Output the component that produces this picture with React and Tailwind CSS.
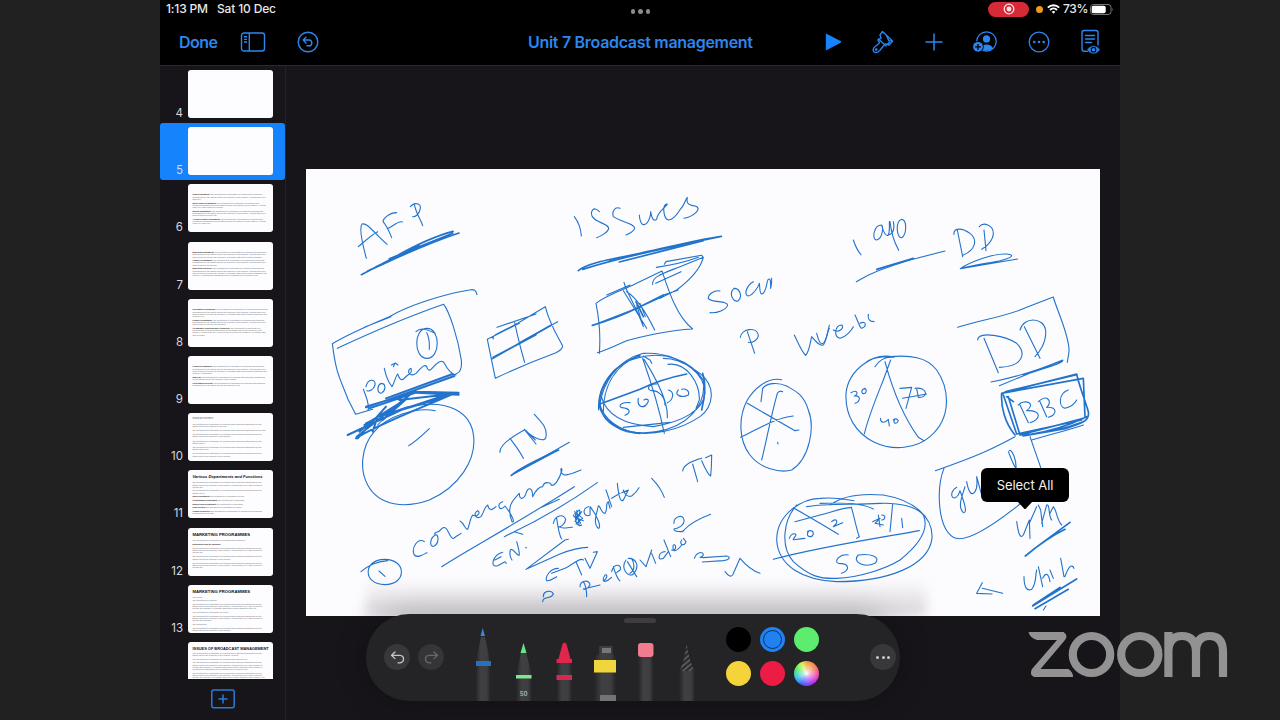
import React from "react";

const INK = "#2273cc";

const filler =
  "The department is responsible for planning and producing programmes for the station and for the audience of the channel. It works with every other section to prepare the schedule, to manage staff and to control budgets for the network. It maintains the standards of the broadcast and reviews the content before it goes on air each day. ";

const slides = [
  { n: 4 },
  { n: 5, selected: true },
  { n: 6, top: "pt-[9px]", paras: [["News Department: ", 150], ["Sales Traffic Department: ", 165], ["Sports Department: ", 170], ["Art and Creative Department: ", 150]] },
  { n: 7, top: "pt-[9.5px]", paras: [["Marketing Department: ", 220], ["Finance Department: ", 170], ["Marketing Research: ", 300]] },
  { n: 8, top: "pt-[9.5px]", paras: [["Information Technology: ", 240], ["Finance Department: ", 180], ["HR Manager Reporting and Production: ", 210]] },
  { n: 9, top: "pt-[9.5px]", paras: [["Product Department: ", 250], ["Make-Up: ", 120], ["Presentation Director: ", 110]] },
  { n: 10, top: "pt-[3.5px]", heading: "Broadcast Research", gap: true, paras: [["", 115], ["", 80], ["", 120], ["", 90], ["", 95], ["", 120]] },
  { n: 11, title: "Various Departments and Functions", italic: true, paras: [["", 170], ["", 90], ["Sales Department ", 38], ["Programming Department ", 30], ["Engineering Department ", 30], ["News Section ", 40], ["Human Resources ", 80]] },
  { n: 12, title: "MARKETING PROGRAMMES", gap: true, paras: [["", 58], ["Distribution and the message", 0], ["", 170], ["", 120], ["", 170]] },
  { n: 13, title: "MARKETING PROGRAMMES", paras: [["", 10], ["", 26], ["", 230], ["", 40], ["", 180], ["", 15], ["", 120]] },
  { n: 14, title: "ISSUES OF BROADCAST MANAGEMENT", wide: true, paras: [["", 130], ["", 60], ["", 300], ["", 240]] },
];

function Thumb({ s }) {
  return (
    <div className={"flex h-[57.2px] shrink-0 items-center rounded-[3px] " + (s.selected ? "bg-[#1583fb]" : "")}>
      <div className="flex h-12 w-[23px] shrink-0 items-end justify-end text-[11.5px] leading-[10px] text-[#d8d8dc]">{s.n === 14 ? "" : s.n}</div>
      <div className={"ml-[4.5px] h-12 w-[85px] overflow-hidden rounded-[3px] bg-[#fdfcfe] px-[5px] text-[#6a686e] " + (s.top || "pt-[4px]")}>
        {s.title && (
          <div className={"mb-[1px] whitespace-nowrap font-['Liberation_Sans',sans-serif] font-bold text-[#111] " + (s.italic ? "italic text-[4.1px] leading-[6px]" : s.wide ? "text-[3.9px] leading-[5px]" : "text-[4.2px] leading-[6px]")}>{s.title}</div>
        )}
        {s.heading && <div className="mb-[3px] text-[2.2px] leading-[3px]">{s.heading}</div>}
        {(s.paras || []).map(([b, len], i) => (
          <p key={i} className={"text-[2px] leading-[2.25px] font-['Liberation_Sans',sans-serif] " + (s.gap ? "mb-[1.9px]" : "mb-[1.4px]")}>
            <b className="text-[#1c1b1e]">{b}</b>
            {(filler + filler).slice(0, len)}
          </p>
        ))}
      </div>
    </div>
  );
}

/* Each sheet of ink strokes is stored at triple scale from its own origin. */
const ink = [
  {
    at: "translate(306 170) scale(.33333)",
    fine: [
      "M181 265C170 225 158 175 168 162C185 158 200 185 243 223M157 230C175 215 195 195 215 185",
      "M272 128C250 128 232 145 231 155C243 168 250 185 257 203M244 176C260 170 278 150 289 156",
      "M313 110C325 95 345 100 343 115C340 135 325 142 320 140M325 103C330 130 345 150 350 167",
      "M94 535C180 495 320 435 413 403C430 425 455 500 466 570C468 595 465 610 440 615",
      "M513 374C510 360 505 357 490 360C400 375 300 410 250 440C190 465 130 490 79 521C90 610 100 620 127 690L149 733L200 718M175 472L255 440",
      "M363 475C322 475 322 565 363 565C404 565 404 475 363 475M330 485C345 470 360 478 388 490M362 488C372 505 370 520 370 538",
      "M172 658C185 690 190 710 186 720M180 650C185 625 210 625 207 645C203 660 190 665 183 662",
      "M225 640C210 650 215 675 228 668C240 660 240 640 225 640M235 595C240 620 250 640 258 650C265 640 268 620 275 612C280 625 285 635 295 625C305 610 320 615 315 595C300 600 310 625 330 610C345 595 355 580 362 590C365 600 370 605 378 595C400 570 410 570 415 580C425 600 440 615 450 615M256 585l12-6l8 6M262 590l4-8",
      "M573 472L690 432M562 507C555 490 600 485 660 445L718 410C730 460 750 490 770 528Q770 538 750 548C690 570 620 600 568 625L544 508L640 460M626 458C635 500 645 540 656 577M640 518L755 455",
    ],
    bold: ["M166 314L250 270C310 235 380 200 441 184M185 303C270 265 350 225 459 189M250 266L440 190M210 290L340 228", "M558 566L640 520L735 466M562 562L690 494"],
  },
  {
    at: "translate(306 390) scale(.33333)",
    fine: [
      "M388 62C330 50 240 80 205 125C165 170 160 240 185 285C220 350 300 355 370 330C460 290 510 210 503 140C495 60 420 35 340 45C280 50 240 75 215 105M308 167C325 158 350 135 370 116",
      "M582 187C580 170 600 150 655 120M612 145C630 170 640 180 652 205M655 118L690 162M660 122C680 145 720 160 720 140C725 110 700 90 685 73M655 118L688 150M616 256L790 157",
      "M355 455C335 440 315 475 325 495C335 505 350 495 363 488M388 435C370 445 370 475 385 468C400 460 398 430 388 435C380 425 400 430 405 418C425 395 430 450 443 445C455 435 460 435 465 430",
      "M462 393C475 400 478 420 485 418C492 400 492 385 500 375C515 385 525 365 515 362C500 370 510 390 525 380C535 365 535 350 545 345C550 365 560 360 570 350",
      "M590 335C570 340 580 370 597 348C615 370 630 400 618 395C600 350 620 330 640 310C640 335 655 325 660 310C665 290 680 290 680 320C690 300 700 290 710 290C715 270 740 280 735 285C745 290 760 270 768 240C765 225 760 250 775 255C790 255 810 245 825 240",
      "M407 530C500 470 600 420 805 290M595 440C680 400 780 345 874 278M600 437L625 425L650 433M700 355L760 328",
      "M236 508C170 508 170 584 236 584C303 584 303 508 236 508M165 545C190 525 210 515 245 512M219 543L237 559",
      "M590 487C560 495 550 535 575 527L597 515M567 510L585 500M618 510C610 500 610 480 616 478C625 480 635 500 640 495C640 480 635 465 632 455M599 518l2 2M659 472l2 2",
    ],
    bold: ["M616 256C640 235 680 215 758 180M625 250L752 182"],
    heavy: [
      "M180 52L250 28L445-42M240 25L440-48M180 50L330 5L458 8M190 55L330 8L458 14M280 30L455 10M125 135L285 60L440 8M150 145C200 110 330 60 440 12M152 140L330 0M175 105L280 40L230 90L300 28M155 145L240 50M200 125L215 80L420 20M180 100L210 85L160 125",
    ],
  },
  {
    at: "translate(560 170) scale(.33333)",
    fine: [
      "M43 140Q62 165 64 198M118 125C100 105 90 125 97 140C110 160 145 160 146 175C145 185 125 198 110 203M180 115C165 108 155 125 160 140C180 155 225 160 224 175C220 185 210 190 198 195",
      "M238 135C240 160 248 170 260 160C272 145 272 130 272 125C275 145 280 155 290 148C292 125 320 110 322 102C305 100 310 145 325 150C340 148 350 135 358 122C375 105 375 90 382 82C378 100 385 105 405 108C430 115 400 140 372 145",
      "M118 550C122 500 118 450 108 400C140 375 190 360 225 342L306 303C325 360 350 440 398 477C330 480 240 500 200 512C170 525 140 540 112 548M140 375L210 345",
      "M192 337C200 370 225 400 250 470M190 362L260 475M200 365C225 380 250 410 284 480M230 405L250 470M240 400L256 440M310 375L354 361",
      "M313 283L318 275L425 256M289 292C340 285 380 275 415 262M278 343C275 320 310 310 360 290L430 262C420 300 390 330 350 360L300 385M287 340L363 305M425 256L430 262",
      "M480 363C465 360 445 370 445 385C455 400 500 390 503 405C500 420 470 430 450 428M522 355C505 370 520 400 535 392C548 380 540 355 522 355M580 335C560 345 550 375 565 378C580 375 595 350 598 340C600 350 598 370 605 372C620 370 620 330 625 328C632 325 632 335 632 355C635 340 637 330 634 325",
      "M541 502C545 475 590 470 595 495C595 510 575 520 565 517M562 485L584 550M703 495C715 520 725 545 737 556C748 545 750 520 755 500C768 515 780 530 790 525C800 510 800 490 808 475",
      "M148 272L300 238",
    ],
    bold: ["M55 302C80 280 150 268 240 250C330 230 420 208 484 199M68 298C150 272 300 236 484 199M178 276L300 245L430 212", "M97 466C150 450 200 430 240 410L310 375M110 462L240 412M180 437L310 378M228 395L250 440"],
  },
  {
    at: "translate(540 390) scale(.33333)",
    fine: [
      "M85 448L75 450L-42 538L60 492C90 480 120 472 143 472",
      "M50 385C55 420 60 440 65 447M40 400C45 375 70 370 77 388C75 405 60 412 55 410C70 420 85 410 97 412",
      "M100 375C110 395 125 365 118 360C100 370 105 415 125 405M104 370L122 400M110 362L118 408M102 380L130 392M105 395L125 365M104 365L128 385L108 402",
      "M145 350C125 355 130 385 150 375L150 350C175 380 185 415 175 415C158 400 170 370 175 348C180 345 185 372 195 370C205 355 195 340 205 335L210 355M198 300L215 350M232 280C235 310 240 340 250 330L265 300L245 308M250 300C255 315 265 322 275 318C285 310 290 305 297 293M215 325L240 310",
      "M335 265C350 280 365 300 373 322M428 243C430 225 450 215 485 205M458 222L473 275M485 212C495 235 505 255 512 258C515 230 515 210 515 195L497 203",
      "M402 400C400 380 430 370 432 390C435 405 415 415 402 417C400 425 430 428 432 420C450 400 480 385 512 373",
      "M130 575C140 590 140 605 140 620M120 590C120 570 150 568 150 585C145 595 135 600 130 597L180 585M190 572C200 570 205 550 195 555C185 570 190 580 205 570L215 562M220 530C225 550 235 570 240 572M215 545C222 515 248 525 240 540L230 548",
      "M258 510C240 535 265 565 280 552C300 530 290 505 265 505M262 515L290 560M275 505C285 525 285 540 270 550M300 510L318 530L335 480M335 490L347 520M375 485C355 485 350 515 370 505L385 485M372 450L392 500M395 480C410 485 410 460 400 465C395 490 410 485 425 465M425 450C415 465 435 470 438 455L430 445",
      "M55 535C30 535 15 560 20 572C30 575 40 565 50 560M35 550L75 535M75 535C90 530 120 500 130 510M108 515L125 555M135 505L150 535L172 485L160 487M10 620C10 600 35 600 40 612C35 625 20 620 10 628L8 635",
      "M463 505C470 485 490 483 490 495C485 505 470 500 490 503L560 498C572 500 570 510 550 512L487 516M555 545Q570 565 578 555L600 505Q630 540 660 550",
      "M725-31C680-40 640 0 622 30C595 80 595 150 630 195C660 235 720 250 755 240C810 205 825 110 805 60C790 10 760 0 740-12C710-25 680-20 668-5L663 35M622 40L765 122L777 120M602 142C650 120 700 85 760 78M665 210C680 150 690 90 712 10Q718 0 728 5M713 157l1 5",
      "M270 38C240 35 235 50 245 53C270 55 275 68 255 76M295 25C290 50 310 58 322 40C330 28 320 25 312 30M350-18C325-20 318 0 335 2C350 0 375 15 375 45M385 0C405 5 400 30 382 38M415 0C400 15 425 25 445 15C450 0 435-5 425-2",
      "M306-100C320-60 350 20 373 130M312-92C345-40 385 30 382 83M310-102L330-90L335-80M250 112L390 97M384-77C440-85 480-20 478 30L468 55",
      "M180 40C190-20 230-90 310-110C400-115 450-70 480-50C530-10 520 50 480 80C420 120 340 140 260 125C200 105 175 70 180 30",
      "M176 60C170-10 220-80 290-95C370-120 450-90 490-30C500 50 440 110 350 125C260 140 185 100 176 40",
      "M190 65C190 0 215-70 300-105M184 20C200 80 260 105 340 110C430 95 490 60 495 10C495-50 430-95 370-95",
    ],
    bold: ["M178 40C180-10 220-80 300-102M178 40C190 90 240 125 300 130M488-50C498-20 495 20 485 60", "M180 42L300-2C340-22 400-40 440-48"],
  },
  {
    at: "translate(820 170) scale(.33333)",
    fine: [
      "M100 210Q110 240 123 254M185 165C160 165 155 210 170 210C190 205 190 165 185 165C190 190 200 200 205 195C212 180 205 150 210 155C215 200 230 230 236 241M205 195C225 190 222 165 220 155M245 148C225 155 230 205 245 203C260 195 262 150 245 148",
      "M109 335C150 310 190 295 270 270L375 243",
      "M402 193C400 170 430 175 450 190C475 210 465 240 430 255M412 180L428 260M478 170C490 155 520 165 520 190C520 210 500 230 485 238M492 180L498 242M421 296C450 275 520 250 560 252C590 255 570 265 540 272C500 280 460 285 421 296L593 267",
      "M413 472C480 450 560 440 620 412L700 381C710 420 750 500 747 545L742 577M473 510C475 480 560 500 590 520C620 550 610 590 538 592M492 505L535 608M600 480C610 440 670 440 677 480C680 520 655 550 645 560M613 470L660 565M513 636C600 620 680 590 728 570C735 580 640 605 610 615M538 647L640 605L728 572",
      "M-10 490C0 530 10 530 20 500L28 465M40 480C55 490 75 475 65 465C45 465 40 500 60 505C80 500 95 480 100 470M105 435C115 455 118 472 125 475C140 470 140 450 120 460M145 433Q142 455 162 455",
    ],
    bold: ["M170 298L280 265"],
  },
  {
    at: "translate(820 380) scale(.33333)",
    fine: [
      "M165-40C180-65 200-70 222-68C160-85 85-30 78 40C75 110 110 160 160 185C220 215 290 205 330 170C400 110 385 20 350-30C320-70 270-75 210-70Q160-70 140-55",
      "M212-60L190 0C170 50 145 110 133 162M195-55C215 20 250 110 295 172L312 182M93 38C115 25 115 45 103 48C125 45 120 65 105 70M135 25C120 30 125 45 135 40C142 32 138 25 132 27M240 25L275 22L258 85M248 55L320 42M290 25L295 52C325 55 325 20 285 25M182 115C180 130 195 130 205 118L208 138M225 118C215 130 230 135 235 122C232 115 225 115 220 120",
      "M600 75L625 128M595 75C615 55 650 70 620 92C670 90 660 120 630 128M660 65L680 110M655 65C680 40 700 65 680 82C715 80 710 105 685 112M745 30C715 40 715 80 735 85C755 80 765 70 770 60M635 180C700 160 750 150 790 135",
      "M585 170C520 205 480 225 346 272M372 265C350 320 350 440 400 472C440 495 540 420 600 372M630 170L663 265M565 215C575 240 580 255 588 265C590 240 575 205 568 212",
      "M410 322C385 335 395 370 415 345L420 332C430 360 445 400 430 398C410 380 430 340 435 320M440 305C445 335 455 350 465 335C475 320 470 300 470 290L485 345",
      "M590 425C595 460 600 478 610 465L628 420L630 475M628 430L650 380M655 375L662 390L668 440M665 430L680 375C690 370 685 410 695 420M690 400L700 380C710 390 710 420 725 435",
      "M612 590C612 620 620 635 635 628C650 610 645 590 650 570M655 560L668 620M668 595C675 580 685 575 690 605M722 535L732 590M735 590C745 560 755 550 762 565M690 570L700 595",
      "M487 608L470 640L516 642M487 625L548 640M30 375C70 345 130 340 190 345C280 360 340 410 336 475C325 560 200 605 50 605C-50 600-125 560-130 480C-130 400-50 355 0 355C40 352 70 355 102 362",
      "M-70 375C-110 420-120 500-80 545C-30 590 0 597 50 595C120 592 200 565 240 540C290 500 330 450 310 405C290 380 240 368 180 370C100 375 20 370-40 380M0 370Q120 365 160 387",
      "M-140 538C0 500 200 470 298 452M-80 383L0 430L55 463M-75 425L0 405C40 395 60 385 95 382M95 385C105 420 110 450 118 470L110 475M218 372L210 455M245 415L248 443",
      "M-92 475C-85 455-65 460-75 470C-85 485-85 478-45 475M-35 455C-45 470-25 475-20 463C-20 450-30 450-38 455M35 425C45 415 55 420 48 432L40 440L68 428M158 425L180 415L165 430L190 435M175 405L180 440M185 405C200 405 195 420 185 420",
      "M85 525C60 520 40 545 55 550C90 550 90 570 65 580M115 525C95 545 130 565 165 550C185 530 150 520 115 525M670 690L678 678",
    ],
    bold: [
      "M545 40C620 20 700 0 770-18C775 10 795 60 805 95C810 125 780 130 740 145L610 168M545 40C542 80 555 130 585 165M555 38L790-5L795 110M550 45L590 162L785 120M565 50L600 165L790 115M600 165Q700 160 790 125M560 50L580 65M620 165Q720 150 800 110M545 42L560 34L770-16",
      "M616 528C650 500 690 470 735 448M640 508L750 427M638 678L770 597M645 686L745 628M640 675L720 622",
    ],
  },
];

function Handwriting() {
  return (
    <svg className="block h-full w-full" viewBox="306 169 795 447" fill="none" stroke={INK} strokeLinecap="round" strokeLinejoin="round">
      {ink.map((g, i) => (
        <g key={i} transform={g.at}>
          <path d={g.fine.join("")} strokeWidth="3.3" />
          {g.bold && <path d={g.bold.join("")} strokeWidth="5" />}
          {g.heavy && <path d={g.heavy.join("")} strokeWidth="6" />}
        </g>
      ))}
    </svg>
  );
}

function StatusBar() {
  return (
    <div className="relative flex h-5 items-center justify-between pl-[6px] pr-[6px] text-[12px] font-medium text-[#e9e9e9]">
      <div className="-mt-[2px] flex gap-[9px] whitespace-nowrap tracking-[-0.15px]">
        <span>1:13 PM</span>
        <span>Sat 10 Dec</span>
      </div>
      <div className="absolute left-[470.5px] top-[9px] flex gap-[3px]">
        <i className="size-[4.5px] rounded-full bg-[#8b8b8d]" />
        <i className="size-[4.5px] rounded-full bg-[#8b8b8d]" />
        <i className="size-[4.5px] rounded-full bg-[#8b8b8d]" />
      </div>
      <div className="-mt-[2px] flex items-center">
        <span className="flex h-[15px] w-[41px] items-center justify-center rounded-full bg-[#d62a36]">
          <svg className="size-3" viewBox="0 0 12 12"><circle cx="6" cy="6" r="4.8" fill="none" stroke="#fbe3e3" strokeWidth="1.3" /><circle cx="6" cy="6" r="2.4" fill="#fbe3e3" /></svg>
        </span>
        <span className="ml-[7px] size-[7px] rounded-full bg-[#f09a1c]" />
        <svg className="ml-[4px] h-[10px] w-[13px]" viewBox="0 0 13 10" fill="none" stroke="#fff" strokeWidth="1.9">
          <path d="M.8 3.6a8.2 8.2 0 0 1 11.4 0M3 6a5 5 0 0 1 7 0" /><path d="M6.5 9.8L4.7 7.8a2.6 2.6 0 0 1 3.6 0Z" fill="#fff" stroke="none" />
        </svg>
        <span className="ml-[3px] w-[25px] text-[12px] tracking-[-0.3px]">73%</span>
        <svg className="ml-[2px] h-[11px] w-[24px]" viewBox="0 0 24 11">
          <rect x=".5" y=".5" width="20.5" height="10" rx="3" fill="none" stroke="#77777a" /><rect x="1.7" y="1.7" width="14" height="7.6" rx="1.8" fill="#fff" /><path d="M22.3 3.7q1.5 1.8 0 3.6z" fill="#77777a" />
        </svg>
      </div>
    </div>
  );
}

function Toolbar() {
  return (
    <div className="relative flex h-[43px] items-center px-[19px] text-[#2c86ee]">
      <span className="w-[40px] text-[16px] font-semibold tracking-[-0.5px]">Done</span>
      <svg className="ml-[21px] h-5 w-[26px]" viewBox="0 0 26 20" fill="none" stroke="currentColor" strokeWidth="1.4">
        <rect x="1.5" y="1" width="23" height="18" rx="2.5" /><path d="M9.3 1v18M4 4.8h3M4 7.4h3M4 10h3" />
      </svg>
      <svg className="ml-[31px] size-[22px]" viewBox="0 0 22 22" fill="none" stroke="currentColor" strokeWidth="1.4" strokeLinecap="round" strokeLinejoin="round">
        <circle cx="11" cy="11" r="9.8" /><path d="M9 6.2L6.2 9l2.8 2.9M6.4 9h5.5a2.9 2.9 0 0 1 0 5.8h-2" />
      </svg>
      <span className="ml-[209px] w-[226px] whitespace-nowrap text-[16px] font-semibold tracking-[-0.3px]">Unit 7 Broadcast management</span>
      <div className="absolute right-[19px] flex items-center">
        <svg className="mr-[30px] h-[18px] w-[17px]" viewBox="0 0 17 18" fill="#1583fb"><path d="M.8 1.6Q.8.5 1.9 1l13.7 7.1q1.2.8 0 1.6L1.9 17Q.8 17.5.8 16.4Z" /></svg>
        <svg className="mr-[31px] h-6 w-[22px]" viewBox="0 0 22 24" fill="none" stroke="currentColor" strokeWidth="1.35" strokeLinejoin="round" strokeLinecap="round">
          <path d="M10.5 1.4L20.6 11.2L17 15L13.5 13.9Q12.6 14.3 12 15.5L11.2 16.3L7.7 20.5Q4.5 24 1.9 21.8Q-.2 18.9 3.5 16.2L6.7 13.8L7.5 12.5L5.8 10.2Q6 9 7.8 9L9 8.2L8 5Z" /><path d="M6.7 9.3L14.2 16M14.5 5.5L16.8 10.6L20 10.8M15.5 14.2L18.5 10.9" /><circle cx="4.2" cy="19.5" r=".7" />
        </svg>
        <svg className="mr-[29px] size-[18px]" viewBox="0 0 18 18" stroke="currentColor" strokeWidth="1.5" strokeLinecap="round"><path d="M9 1v16M1 9h16" /></svg>
        <svg className="mr-[31px] h-6 w-[25px]" viewBox="0 0 25 24">
          <circle cx="14.5" cy="11.5" r="9.7" fill="none" stroke="currentColor" strokeWidth="1.3" /><circle cx="14.5" cy="8.9" r="3.6" fill="currentColor" /><path d="M8 18.5Q9.5 14.5 14.5 14.5T21 18.5Q14.5 23 8 18.5" fill="currentColor" /><circle cx="6" cy="16.8" r="5.8" fill="#000" /><circle cx="6" cy="16.8" r="4.9" fill="currentColor" /><path d="M6 13.9v5.8M3.1 16.8h5.800" stroke="#000" strokeWidth="1.3" />
        </svg>
        <svg className="mr-[30px] size-[22px]" viewBox="0 0 22 22"><circle cx="11" cy="11" r="9.8" fill="none" stroke="currentColor" strokeWidth="1.3" /><g fill="currentColor"><circle cx="6.3" cy="11" r="1.3" /><circle cx="11" cy="11" r="1.3" /><circle cx="15.7" cy="11" r="1.3" /></g></svg>
        <svg className="h-[26px] w-[21px]" viewBox="0 0 21 26" fill="none" stroke="currentColor" strokeWidth="1.4" strokeLinecap="round">
          <path d="M7.5 22.3H4.2Q2 22.3 2 20V3.7Q2 1.5 4.2 1.5H15.8Q18 1.5 18 3.700V16M5.5 6.5h9M5.5 10h9M5.5 13.5h6" />
          <path d="M6.8 20.7Q10 16.5 13.5 16.5T20.2 20.7Q17 24.9 13.5 24.9T6.8 20.7" fill="currentColor" stroke="#000" strokeWidth=".6" /><circle cx="13.5" cy="20.7" r="2.3" fill="currentColor" stroke="#000" strokeWidth="1.100" />
        </svg>
      </div>
    </div>
  );
}

function Tools() {
  return (
    <svg className="absolute left-[110px] top-[14px] h-[73px] w-[230px]" viewBox="476 628 230 73">
      <defs>
        <linearGradient id="barrel"><stop offset="0" stopColor="#242327" /><stop offset=".35" stopColor="#403f42" /><stop offset=".75" stopColor="#3e3d40" /><stop offset="1" stopColor="#242327" /></linearGradient>
        <pattern id="twist" width="4" height="4" patternUnits="userSpaceOnUse" patternTransform="rotate(50)"><rect width="4" height="4" fill="#29282b" /><rect width="1.7" height="4" fill="#5f5e61" /></pattern>
      </defs>
      <g fill="url(#barrel)">
        <path d="M481 637h4l5.500 26v38h-15v-38Z" /><path d="M521 652h5l6 24v25h-16v-24Z" /><path d="M556.500 663h15.500v38h-15.500Z" />
        <path d="M594 701v-44l5-3v-8h14v8l3 3v44Z" /><path d="M638 657h15.500v44H638Z" /><path d="M679 670h16v31h-16Z" />
      </g>
      <path d="M480.500 636L482.700 628L485 636Z" fill="#3d86d8" /><rect x="475" y="661" width="16" height="5" fill="#286fc0" />
      <path d="M520.500 653L523.500 643L526.500 653Z" fill="#67e685" /><rect x="516" y="675" width="15.500" height="3.500" fill="#7ee88f" />
      <path d="M556.500 663v-4h2l4-15q2-3 4 0l4 15h1.500v4Z" fill="#e1264e" /><rect x="556.500" y="675" width="15.500" height="5" fill="#d62950" />
      <rect x="602" y="648" width="9" height="5" fill="#77767a" /><rect x="594" y="660" width="22" height="12.500" fill="#f0d63d" /><rect x="600" y="695" width="16" height="6" fill="#737276" />
      <rect x="638" y="643" width="15.500" height="14" rx="3" fill="#f07c8e" />
      <path d="M679.500 671Q685 660 686.500 643Q689 660 694.500 671Z" fill="url(#twist)" />
      <text x="523.500" y="696" textAnchor="middle" fontSize="6" fontWeight="600" fill="#b5b5b8" fontFamily="Inter, sans-serif">50</text>
    </svg>
  );
}

function Palette() {
  return (
    <div className="absolute left-[80px] top-[548px] h-[87px] w-[534px] rounded-[44px] bg-[#242326] shadow-[0_0_30px_rgba(0,0,0,0.28)]">
      <div className="absolute left-[258px] top-[4px] h-[5px] w-8 rounded-full bg-[#403d41]" />
      <div className="absolute left-[18px] top-[30px] flex gap-2">
        <span className="flex size-[26px] items-center justify-center rounded-full bg-[#38373b] text-[#c6c6c9]">
          <svg className="size-[15px]" viewBox="0 0 15 15" fill="none" stroke="currentColor" strokeWidth="1.3" strokeLinecap="round" strokeLinejoin="round"><path d="M5 2L1.5 5.3L5 8.6M2 5.3h8q3.5.3 3.5 3.7T10 12.8H8" /></svg>
        </span>
        <span className="flex size-[26px] items-center justify-center rounded-full bg-[#353438] text-[#68676b]">
          <svg className="size-[15px]" viewBox="0 0 15 15" fill="none" stroke="currentColor" strokeWidth="1.3" strokeLinecap="round" strokeLinejoin="round"><path d="M10 2l3.5 3.3L10 8.6M13 5.3H5Q1.5 5.6 1.5 9T5 12.8H7" /></svg>
        </span>
      </div>
      <Tools />
      <div className="absolute left-[360px] top-[13px] grid grid-cols-3 gap-x-[9px] gap-y-[9px]">
        <i className="size-[25px] rounded-full bg-black" />
        <i className="flex size-[25px] items-center justify-center rounded-full bg-[#2181f2]"><i className="size-[19px] rounded-full border-[1.5px] border-[#15304f]" /></i>
        <i className="size-[25px] rounded-full bg-[#5cec6e]" />
        <i className="size-[25px] rounded-full bg-[#f5d33b]" />
        <i className="size-[25px] rounded-full bg-[#ec1c45]" />
        <i className="size-[25px] rounded-full bg-[radial-gradient(circle,#fff_0%,rgba(255,255,255,0.6)_20%,transparent_65%),conic-gradient(#f5a33b,#f07858_60deg,#f03ac0_110deg,#a42af5_150deg,#4060f5_205deg,#30c8e8_250deg,#50f060_295deg,#d8f050_335deg,#f5a33b)]" />
      </div>
      <div className="absolute left-[504px] top-[30px] flex size-[26px] items-center justify-center gap-[2.5px] rounded-full bg-[#38373b]">
        <i className="size-[3px] rounded-full bg-[#c9c9cc]" />
        <i className="size-[3px] rounded-full bg-[#c9c9cc]" />
        <i className="size-[3px] rounded-full bg-[#c9c9cc]" />
      </div>
    </div>
  );
}

export default function App() {
  return (
    <div className="relative flex h-[720px] w-[1280px] overflow-hidden bg-[#212121] font-['Inter','Liberation_Sans',sans-serif]">
      <div className="mx-auto flex w-[960px] flex-col bg-[#17151a]">
        <header className="h-[66px] shrink-0 border-b border-[#29282b] bg-black">
          <StatusBar />
          <Toolbar />
        </header>
        <div className="flex h-[654px]">
          <aside className="flex w-[126px] shrink-0 flex-col border-r border-[#242228]">
            <div className="h-[613px] overflow-hidden">
              <div className="-mt-[0.6px] flex flex-col">{slides.map((s) => <Thumb key={s.n} s={s} />)}</div>
            </div>
            <div className="flex flex-1 justify-center pt-[10px]">
              <svg className="h-5 w-6" viewBox="0 0 24 20" fill="none" stroke="#2c7bd8" strokeWidth="1.5"><rect x=".8" y="1" width="22.4" height="17.8" rx="2" /><path d="M12 5.500v9M7.500 10h9" /></svg>
            </div>
          </aside>
          <main className="relative flex-1 pl-5 pt-[103px]">
            <div className="relative h-[447px] w-[794px] overflow-hidden bg-[#fcfbfe]">
              <div className="absolute bottom-0 left-[60px] h-9 w-[560px] bg-linear-to-b from-transparent to-[#d5d2d6] blur-[6px]" />
              <div className="relative h-full w-[795px]"><Handwriting /></div>
            </div>
            <div className="absolute left-[695px] top-[402px] flex h-[34px] w-[88px] items-center justify-center rounded-md bg-black pt-[1px] text-[13px] tracking-[-0.05px] text-[#f1f1f1]">
              Select All
              <svg className="absolute left-[36px] top-[33px] h-[9px] w-4" viewBox="0 0 16 9"><path d="M0 0H16L9 7.500Q8 8.500 7 7.500Z" /></svg>
            </div>
            <Palette />
          </main>
        </div>
      </div>
      <svg className="absolute left-[1026px] top-[630px] h-[50px] w-[204px]" viewBox="1026 630 204 50" fill="none" stroke="#929292" strokeWidth="8.2" aria-label="zoom">
        <path d="M1028.500 632h35q5 3 1.500 8l-24.500 29h28q4.500 3 4.500 8h-39q-5-3-2-8l25-29h-20q-7-2-8.500-8Z" fill="#929292" stroke="none" />
        <ellipse cx="1091.500" cy="654.500" rx="18.700" ry="18.500" />
        <ellipse cx="1139.800" cy="654.500" rx="18.600" ry="18.500" />
        <path d="M1168.400 677V632M1168.400 652Q1168.400 636 1182 636T1196 652V677M1196 652Q1196 636 1209.500 636T1223 652V677" />
      </svg>
    </div>
  );
}
